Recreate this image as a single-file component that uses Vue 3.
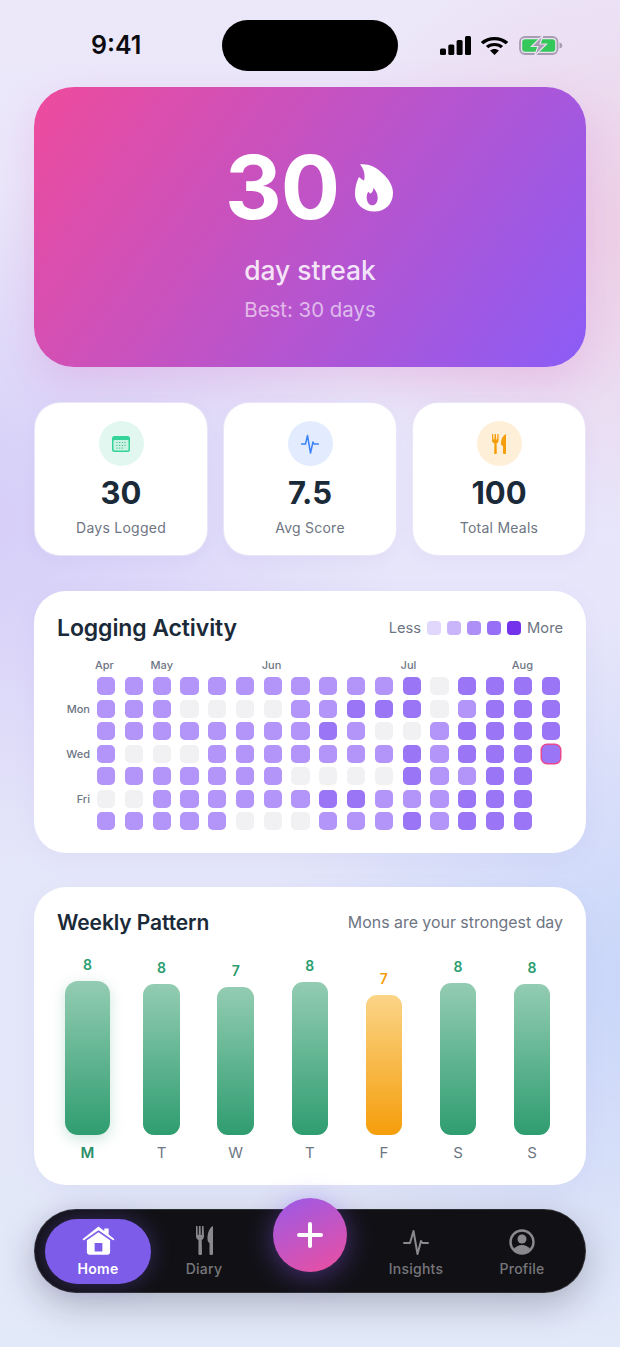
<script setup>
const months = [
  { name: 'Apr', col: 1 },
  { name: 'May', col: 3 },
  { name: 'Jun', col: 7 },
  { name: 'Jul', col: 12 },
  { name: 'Aug', col: 16 }
]
const days = ['', 'Mon', '', 'Wed', '', 'Fri', '']
const rows = [
  'aaaaaaaaaaab0bbbb',
  'aaa0000aabbb0abbb',
  'aaaaaaaaba00abbbb',
  'a000aaaaaaababbbT',
  'aaaaaaa0000baabb ',
  '00aaaaaabbaaabbb ',
  'aaaaa000aaababbb '
]
const cells = []
for (let c = 0; c < 17; c++) {
  for (let r = 0; r < 7; r++) {
    cells.push(rows[r][c] || ' ')
  }
}
const legend = ['#e1d6fb', '#c9b5f9', '#ad8ff7', '#966ff6', '#7433ea']
const bars = [
  { d: 'M', v: 8, h: 154.5, top: 'green', active: true },
  { d: 'T', v: 8, h: 151.5, top: 'green' },
  { d: 'W', v: 7, h: 148, top: 'green' },
  { d: 'T', v: 8, h: 153, top: 'green' },
  { d: 'F', v: 7, h: 140, top: 'amber' },
  { d: 'S', v: 8, h: 152, top: 'green' },
  { d: 'S', v: 8, h: 151, top: 'green' }
]
</script>

<template>
  <div class="screen">
    <header class="status">
      <span class="time">9:41</span>
      <span class="island"></span>
      <span class="status-icons">
        <svg width="31" height="19" viewBox="0 0 31 19"><rect x="0" y="12.500" width="6" height="6.500" rx="1.500"/><rect x="8.300" y="8.500" width="6" height="10.500" rx="1.500"/><rect x="16.600" y="4" width="6" height="15" rx="1.500"/><rect x="25" y="0" width="6" height="19" rx="1.500"/></svg>
        <svg width="27" height="18" viewBox="1 0 26 19" preserveAspectRatio="none"><path d="M14 0C8.800 0 4.200 2 .8 5.300l2.400 2.400C6 5 9.800 3.300 14 3.300S22 5 24.800 7.700l2.400-2.400C23.800 2 19.200 0 14 0z"/><path d="M14 6.300c-3.300 0-6.200 1.300-8.300 3.300l2.400 2.400c1.500-1.500 3.600-2.400 5.900-2.400s4.400.9 5.900 2.400l2.400-2.400C20.200 7.600 17.300 6.300 14 6.300z"/><path d="M14 12.600c-1.700 0-3.200.7-4.300 1.700L14 19l4.300-4.700C17.200 13.300 15.700 12.600 14 12.600z"/></svg>
        <svg class="battery" width="44" height="19" viewBox="0 0 44 19">
          <rect x="1" y="1" width="37.500" height="17" rx="5" fill="none" stroke="#a79db3" stroke-width="1.800"/>
          <rect x="3.200" y="3.200" width="33" height="12.600" rx="3" fill="#34c759"/>
          <path d="M40.500 6.500c2 .5 2.800 1.500 2.800 3s-.8 2.500-2.800 3z" fill="#a79db3"/>
          <path d="M24 -1 12.500 10.500h6.500L15.500 20 27.500 8h-6.500z" fill="#a79db3" stroke="#ebe0f2" stroke-width="1.200"/>
        </svg>
      </span>
    </header>

    <main class="content">
      <section class="hero">
        <div class="hero-num">
          <span>30</span>
          <svg class="flame" width="38" height="48" viewBox="0 0 38 48">
            <path fill-rule="evenodd" fill="#fff" d="M5 .3C13-.5 21 2.500 27 9c7 6 11 13 11 20 0 11-8 18.500-18.500 18.500C8 47.500 0 40 0 30c0-7 1.500-12 4-17l3 2.500 2 1C10.500 11 9 5 5 .3zM18.300 23.700c.3 2.500-.8 4.500-3 6l-2-2c-1.200 2-1.800 4-1.600 6 .2 4.500 2.700 7.600 5.600 7.600 3 0 5.400-3 5.400-7.600 0-4-2-7.500-4.400-10z"/>
          </svg>
        </div>
        <div class="hero-label">day streak</div>
        <div class="hero-best">Best: 30 days</div>
      </section>

      <section class="stats">
        <div class="stat">
          <span class="stat-icon green">
            <svg width="18" height="16" viewBox="0 0 18 16">
              <rect width="18" height="16" rx="2.500" fill="#34d399"/>
              <rect x="1.500" y="4" width="15" height="10.500" rx="1" fill="#c9f3e2"/>
              <g fill="#22a87a">
                <circle cx="5" cy="6.500" r=".6"/><circle cx="7.700" cy="6.500" r=".6"/><circle cx="10.300" cy="6.500" r=".6"/><circle cx="13" cy="6.500" r=".6"/>
                <circle cx="5" cy="9.300" r=".6"/><circle cx="7.700" cy="9.300" r=".6"/><circle cx="10.300" cy="9.300" r=".6"/><circle cx="13" cy="9.300" r=".6"/>
                <circle cx="5" cy="12" r=".6"/><circle cx="7.700" cy="12" r=".6"/><circle cx="10.300" cy="12" r=".6"/>
              </g>
            </svg>
          </span>
          <span class="stat-value">30</span>
          <span class="stat-label">Days Logged</span>
        </div>
        <div class="stat">
          <span class="stat-icon blue">
            <svg width="18" height="20" viewBox="0 0 18 20"><path d="M.5 10H4.500L6.500 1.500 9.500 19 12 8l1 2h4.500" fill="none" stroke="#3b82f6" stroke-width="1.500" stroke-linecap="round" stroke-linejoin="round"/></svg>
          </span>
          <span class="stat-value">7.5</span>
          <span class="stat-label">Avg Score</span>
        </div>
        <div class="stat">
          <span class="stat-icon amber">
            <svg width="14" height="20" viewBox="0 0 14 20" fill="#f59e0b"><path d="M0 0h1.200l.2 5.500h.9L2.600 0h1.300l.3 5.500h.9L5.400 0h1.200v6.500c0 1.500-.8 2.500-2 2.800L4.800 19c0 .6-.5 1-1.300 1s-1.300-.4-1.300-1L2.400 9.300C1 9 0 8 0 6.500z"/><path d="M14 0C11 1.500 9 5 9 9c0 1.800.7 2.800 2 3.100V19c0 .6.600 1 1.500 1s1.500-.4 1.500-1z"/></svg>
          </span>
          <span class="stat-value">100</span>
          <span class="stat-label">Total Meals</span>
        </div>
      </section>

      <section class="card activity">
        <div class="card-head">
          <h2>Logging Activity</h2>
          <div class="legend">
            <span>Less</span>
            <i v-for="c in legend" :key="c" :style="{ background: c }"></i>
            <span>More</span>
          </div>
        </div>
        <div class="months">
          <span v-for="m in months" :key="m.name" :style="{ gridColumnStart: m.col }">{{ m.name }}</span>
        </div>
        <div class="heat-wrap">
          <div class="daynames"><span v-for="(d, i) in days" :key="i">{{ d }}</span></div>
          <div class="heat">
            <i
              v-for="(c, i) in cells"
              :key="i"
              :class="{ a: c === 'a', b: c === 'b', z: c === '0', t: c === 'T', n: c === ' ' }"
            ></i>
          </div>
        </div>
      </section>

      <section class="card weekly">
        <div class="card-head">
          <h2 class="small">Weekly Pattern</h2>
          <span class="hint">Mons are your strongest day</span>
        </div>
        <div class="bars">
          <div v-for="(b, i) in bars" :key="i" class="bar-col" :class="[b.top, { active: b.active }]">
            <span class="bar-val">{{ b.v }}</span>
            <span class="bar" :style="{ height: b.h + 'px' }"></span>
            <span class="bar-day">{{ b.d }}</span>
          </div>
        </div>
      </section>

      <nav class="nav">
        <a class="tab on">
          <svg width="33" height="29" viewBox="0 0 34 30" fill="#fff"><path d="M17 .5 23 5.200V2.500h4.500v6.300L33 13.300c.8.700 0 1.900-.9 1.400L17 4.300 1.900 14.700c-.9.500-1.700-.7-.9-1.400z"/><path fill-rule="evenodd" d="M17 6.500 29 14.800V27c0 1.700-1 2.700-2.700 2.700H7.700C6 29.700 5 28.700 5 27V14.800zM13 17.500v9h8v-9z"/></svg>
          <span>Home</span>
        </a>
        <a class="tab">
          <svg width="17" height="29" viewBox="0 0 17 29" fill="#8a8a8e"><path d="M0 0h1.500l.2 9h1L2.900 0h1.700l.2 9h1L6 0h1.500l.5 10c0 2-1 3.500-2.300 4L6 27.500c0 1-.7 1.500-1.800 1.500s-1.800-.5-1.800-1.500L2.500 14C1 13.500 0 12 0 10z"/><path d="M17 0c-3.500 1.500-5.500 7-5.500 12.500 0 2.500.8 4 2 4.500v10.500c0 1 .7 1.500 1.700 1.500s1.800-.5 1.800-1.500z"/></svg>
          <span>Diary</span>
        </a>
        <a class="tab tab-spacer"></a>
        <a class="tab">
          <svg width="26" height="26" viewBox="0 0 26 26"><path d="M1 14H7L10.500 2 14.500 25 18 12l1.500 2H25" fill="none" stroke="#8a8a8e" stroke-width="2" stroke-linecap="round" stroke-linejoin="round"/></svg>
          <span>Insights</span>
        </a>
        <a class="tab">
          <svg width="26" height="26" viewBox="0 0 26 26"><circle cx="13" cy="13" r="11.500" fill="none" stroke="#8a8a8e" stroke-width="2.400"/><circle cx="13" cy="10" r="4.500" fill="#8a8a8e"/><path d="M4.500 20.500C6.500 17.500 9.500 16 13 16s6.500 1.500 8.500 4.500C19.500 23 16.500 24.500 13 24.500S6.500 23 4.500 20.500z" fill="#8a8a8e"/></svg>
          <span>Profile</span>
        </a>
        <button class="fab" aria-label="Add">
          <svg width="26" height="26" viewBox="0 0 26 26"><path d="M13 2v22M2 13h22" stroke="#fff" stroke-width="4" stroke-linecap="round"/></svg>
        </button>
      </nav>
    </main>
  </div>
</template>

<style scoped>
.screen {
  width: 620px;
  height: 1347px;
  box-sizing: border-box;
  overflow: hidden;
  font-family: Inter, "Noto Sans", sans-serif;
  background:
    radial-gradient(340px 300px at 640px 230px, #edcfe6 0%, rgba(237, 207, 230, 0) 100%),
    radial-gradient(420px 340px at -20px 520px, #d5cdf8 0%, rgba(213, 205, 248, 0) 100%),
    radial-gradient(380px 360px at 640px 980px, #c9d6f9 0%, rgba(201, 214, 249, 0) 100%),
    linear-gradient(180deg, #ece8fa 0%, #e6e5fa 50%, #e2e9f8 100%);
}
.status {
  height: 87px;
  box-sizing: border-box;
  padding: 20px 57px 0 91px;
  display: flex;
  justify-content: space-between;
  align-items: flex-start;
}
.time {
  font-size: 25px;
  font-weight: 600;
  color: #0c0c10;
  line-height: 51px;
  width: 50px;
}
.island {
  width: 176px;
  height: 51px;
  border-radius: 26px;
  background: #000;
  margin-left: 39px;
}
.status-icons {
  display: flex;
  align-items: center;
  gap: 10px;
  height: 51px;
}
.status-icons svg { fill: #000; }
.battery { margin-left: 1px; }
.content {
  padding: 0 34px;
  display: flex;
  flex-direction: column;
  gap: 35px;
}
.hero {
  height: 280px;
  border-radius: 40px;
  background: linear-gradient(125deg, #ee4b9c 0%, #8b5cf6 100%);
  box-shadow: 0 16px 40px rgba(214, 90, 190, 0.22);
  color: #fff;
  display: flex;
  flex-direction: column;
  align-items: center;
  box-sizing: border-box;
  padding-top: 54px;
}
.hero-num {
  display: flex;
  align-items: center;
  gap: 16px;
  font-size: 88px;
  font-weight: 700;
  line-height: 92px;
  letter-spacing: -1px;
}
.flame { margin: 2px 2px 0 0; }
.hero-label {
  margin-top: 19px;
  font-size: 26.400px;
  font-weight: 500;
  line-height: 36px;
  color: rgba(255, 255, 255, 0.85);
}
.hero-best {
  margin-top: 8px;
  font-size: 20.400px;
  line-height: 28px;
  color: rgba(255, 255, 255, 0.6);
}
.stats {
  display: grid;
  grid-template-columns: repeat(3, 1fr);
  gap: 15px;
}
.stat {
  height: 154px;
  box-sizing: border-box;
  background: #fff;
  border: 1.500px solid rgba(225, 218, 245, 0.7);
  border-radius: 26px;
  display: flex;
  flex-direction: column;
  align-items: center;
  padding-top: 18px;
  box-shadow: 0 4px 16px rgba(120, 100, 200, 0.05);
}
.stat-icon {
  width: 45px;
  height: 45px;
  border-radius: 50%;
  display: flex;
  align-items: center;
  justify-content: center;
}
.stat-icon.green { background: #e2f7ef; }
.stat-icon.blue { background: #e2ecfe; }
.stat-icon.amber { background: #feefd9; }
.stat-value {
  margin-top: 7px;
  font-size: 31px;
  font-weight: 700;
  line-height: 40px;
  color: #1b2a38;
}
.stat-label {
  margin-top: 5px;
  font-size: 14px;
  font-weight: 400;
  line-height: 20px;
  letter-spacing: 0.25px;
  color: #6e7583;
}
.card {
  background: #fff;
  border-radius: 32px;
  box-sizing: border-box;
  padding: 0 23px;
  box-shadow: 0 6px 24px rgba(120, 100, 200, 0.06);
}
.activity {
  height: 262px;
  padding-top: 20px;
}
.card-head {
  display: flex;
  justify-content: space-between;
  align-items: center;
  height: 34px;
}
h2 {
  margin: 0;
  font-size: 23px;
  font-weight: 600;
  color: #1b2a38;
  letter-spacing: -0.1px;
}
h2.small { font-size: 21px; }
.legend {
  display: flex;
  align-items: center;
  gap: 6px;
  font-size: 14.700px;
  color: #6e7583;
}
.legend i {
  width: 14px;
  height: 14px;
  border-radius: 4px;
}
.months {
  margin-top: 12px;
  margin-left: 38px;
  display: grid;
  grid-template-columns: repeat(17, 18.200px);
  column-gap: 9.600px;
  font-size: 11px;
  font-weight: 500;
  line-height: 16px;
  color: #6e7583;
}
.months span { white-space: nowrap; grid-row: 1; }
.heat-wrap {
  display: flex;
  margin-top: 4px;
  gap: 7px;
}
.daynames {
  width: 33px;
  display: grid;
  grid-template-rows: repeat(7, 18px);
  row-gap: 4.500px;
  font-size: 11px;
  font-weight: 500;
  line-height: 18px;
  color: #6e7583;
  text-align: right;
}
.heat {
  display: grid;
  grid-auto-flow: column;
  grid-template-rows: repeat(7, 18px);
  grid-template-columns: repeat(17, 18.200px);
  row-gap: 4.500px;
  column-gap: 9.600px;
}
.heat i {
  border-radius: 5px;
}
.heat .a { background: #b394f8; }
.heat .b { background: #9a76f6; }
.heat .z { background: #f1f1f3; }
.heat .t {
  background: #9a76f6;
  box-shadow: 0 0 0 1.500px #e8488f;
}
.hint {
  font-size: 15.900px;
  color: #6e7583;
}
.weekly {
  height: 298px;
  margin-top: -1px;
  padding-top: 18px;
}
.bars {
  margin-top: 14px;
  margin-left: 0.500px;
  display: grid;
  grid-template-columns: repeat(7, 60px);
  column-gap: 14.100px;
  height: 209px;
}
.bar-col {
  display: flex;
  flex-direction: column;
  align-items: center;
  justify-content: flex-end;
}
.bar-val {
  font-size: 14px;
  font-weight: 600;
  line-height: 18px;
  margin-bottom: 7px;
}
.bar {
  width: 36.500px;
  border-radius: 11px;
  display: block;
}
.bar-day {
  margin-top: 9px;
  font-size: 15px;
  line-height: 18px;
  color: #6e7583;
  height: 18px;
}
.green .bar-val { color: #2a9d6f; }
.amber .bar-val { color: #f59e0b; }
.green .bar { background: linear-gradient(180deg, #93ccb2 0%, #2f9d70 100%); }
.amber .bar { background: linear-gradient(180deg, #fbd487 0%, #f59e0b 100%); }
.active .bar {
  width: 45px;
  border-radius: 13px;
  box-shadow: 0 4px 14px rgba(47, 157, 112, 0.25);
}
.active .bar-day {
  color: #2a8f66;
  font-weight: 600;
}
.nav {
  position: relative;
  margin-top: -11px;
  height: 84px;
  box-sizing: border-box;
  padding: 9px 10px 8px;
  border-radius: 42px;
  background: #111115;
  border: 1px solid rgba(255, 255, 255, 0.12);
  box-shadow: 0 12px 36px rgba(20, 20, 40, 0.25);
  display: grid;
  grid-template-columns: repeat(5, 1fr);
}
.tab {
  display: flex;
  flex-direction: column;
  align-items: center;
  justify-content: flex-end;
  gap: 5px;
  padding-bottom: 6px;
  font-size: 14px;
  font-weight: 500;
  line-height: 18px;
  letter-spacing: 0.25px;
  color: #77777b;
}
.tab.on {
  border-radius: 33px;
  background: #7c5ce8;
  color: #fff;
  font-weight: 600;
  box-shadow: 0 0 22px rgba(124, 92, 232, 0.35);
}
.fab {
  position: absolute;
  left: 238px;
  top: -12px;
  width: 74px;
  height: 74px;
  border: 0;
  padding: 0;
  border-radius: 50%;
  background: linear-gradient(155deg, #9a5ae8 0%, #ec4f9f 100%);
  box-shadow: 0 4px 28px rgba(139, 92, 246, 0.45);
  display: flex;
  align-items: center;
  justify-content: center;
}
</style>

<style>
html, body { margin: 0; padding: 0; }
</style>
